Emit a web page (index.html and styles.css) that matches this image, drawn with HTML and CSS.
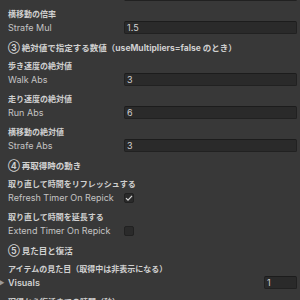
FILE: index.html
```html
<!DOCTYPE html>
<html lang="ja">
<head>
  <meta charset="UTF-8" />
  <title>Pickup Inspector</title>
  <link rel="stylesheet" href="styles.css">
</head>
<body>
  <div class="inspector">
    <div class="row first">
      <span class="label"></span>
      <span class="field"></span>
    </div>

    <div class="prop">
      <div class="hdr">横移動の倍率</div>
      <div class="row">
        <span class="label">Strafe Mul</span>
        <span class="field">1.5</span>
      </div>
    </div>

    <div class="section">③ 絶対値で指定する数値（useMultipliers=false のとき）</div>

    <div class="prop">
      <div class="hdr">歩き速度の絶対値</div>
      <div class="row">
        <span class="label">Walk Abs</span>
        <span class="field">3</span>
      </div>
    </div>
    <div class="prop">
      <div class="hdr">走り速度の絶対値</div>
      <div class="row">
        <span class="label">Run Abs</span>
        <span class="field">6</span>
      </div>
    </div>
    <div class="prop">
      <div class="hdr">横移動の絶対値</div>
      <div class="row">
        <span class="label">Strafe Abs</span>
        <span class="field">3</span>
      </div>
    </div>

    <div class="section">④ 再取得時の動き</div>

    <div class="prop">
      <div class="hdr">取り直して時間をリフレッシュする</div>
      <div class="row">
        <span class="label">Refresh Timer On Repick</span>
        <span class="check on">
          <svg width="8" height="8" viewBox="0 0 8 8"><path d="M1 4.2 L3 6.2 L7 1.8" fill="none" stroke="#d8d8d8" stroke-width="1.2"/></svg>
        </span>
      </div>
    </div>
    <div class="prop">
      <div class="hdr">取り直して時間を延長する</div>
      <div class="row">
        <span class="label">Extend Timer On Repick</span>
        <span class="check"></span>
      </div>
    </div>

    <div class="section">⑤ 見た目と復活</div>

    <div class="prop">
      <div class="hdr">アイテムの見た目（取得中は非表示になる）</div>
      <div class="row foldout">
        <span class="arrow">▶</span>
        <span class="label bold">Visuals</span>
        <span class="field small">1</span>
      </div>
    </div>
    <div class="prop">
      <div class="hdr">取得から復活までの時間（秒）</div>
    </div>
  </div>
</body>
</html>
```

FILE: styles.css
```css
body {
  margin: 0;
  background-color: #383838;
  font-family: Inter, "Noto Sans CJK JP", sans-serif;
  overflow: hidden;
}
.inspector {
  display: flex;
  flex-direction: column;
  padding: 0 3px 0 8px;
}
.row {
  display: flex;
  align-items: center;
  height: 13px;
}
.row.first {
  margin-top: -12px;
}
.label {
  width: 116px;
  flex-shrink: 0;
  font-size: 9px;
  color: #c4c4c4;
  white-space: nowrap;
}
.label.bold {
  font-weight: 600;
  color: #d2d2d2;
}
.field {
  flex: 1;
  height: 13px;
  box-sizing: border-box;
  background: #2a2a2a;
  border: 1px solid #212121;
  border-top-color: #1c1c1c;
  border-radius: 2px;
  font-size: 9px;
  line-height: 11px;
  color: #d2d2d2;
  padding-left: 2px;
}
.field.small {
  flex: none;
  width: 33px;
  margin-left: auto;
}
.check {
  width: 10px;
  height: 10px;
  box-sizing: border-box;
  background: #2a2a2a;
  border: 1px solid #212121;
  border-radius: 2px;
  display: flex;
  align-items: center;
  justify-content: center;
}
.prop {
  margin-top: 6px;
}
.section + .prop {
  margin-top: 4px;
}
.hdr {
  height: 14px;
  line-height: 14px;
  font-size: 8px;
  font-weight: bold;
  color: #d0d0d0;
  white-space: nowrap;
}
.section {
  margin-top: 7px;
  height: 14px;
  line-height: 14px;
  font-size: 8.5px;
  font-weight: bold;
  color: #d0d0d0;
  white-space: nowrap;
}
.foldout {
  position: relative;
}
.arrow {
  position: absolute;
  left: -9px;
  font-size: 6px;
  color: #9a9a9a;
}
```
